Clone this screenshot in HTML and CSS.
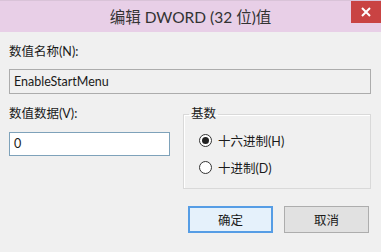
FILE: index.html
```html
<!DOCTYPE html>
<html lang="zh-CN">
<head>
    <meta charset="UTF-8">
    <title>编辑 DWORD (32 位)值</title>
    <link rel="stylesheet" href="styles.css">
</head>
<body>
    <div class="dialog">
        <!-- 标题栏 -->
        <div class="titlebar">
            <div class="title">编辑 DWORD (32 位)值</div>
            <div class="close">
                <svg width="10" height="10" viewBox="0 0 10 10"><path d="M1 1L9 9M9 1L1 9" stroke="#fff" stroke-width="2"/></svg>
            </div>
        </div>

        <div class="content">
            <div class="label">数值名称(N):</div>
            <div class="input name-input">EnableStartMenu</div>

            <div class="row">
                <div class="data-col">
                    <div class="label">数值数据(V):</div>
                    <div class="input value-input">0</div>
                </div>
                <fieldset class="base">
                    <legend>基数</legend>
                    <div class="radio-item"><span class="radio checked"></span>十六进制(H)</div>
                    <div class="radio-item"><span class="radio"></span>十进制(D)</div>
                </fieldset>
            </div>

            <div class="buttons">
                <button class="btn primary">确定</button>
                <button class="btn">取消</button>
            </div>
        </div>
    </div>
</body>
</html>
```

FILE: styles.css
```css
* {
    margin: 0;
    padding: 0;
    box-sizing: border-box;
}

body {
    width: 381px;
    height: 252px;
    background: #f0f0f0;
    font-family: Lato, "Noto Sans CJK SC", sans-serif;
    font-size: 12px;
    color: #1a1a1a;
    overflow: hidden;
}

.titlebar {
    height: 32px;
    background: #e8cfe7;
    border-top: 1px solid #d9c3d8;
    display: flex;
    justify-content: center;
    align-items: center;
    position: relative;
}

.title {
    font-size: 15.5px;
    color: #333;
    margin-top: -2px;
}

.close {
    position: absolute;
    top: 0;
    right: 0;
    width: 30px;
    height: 22px;
    background: #c94343;
    display: flex;
    align-items: center;
    justify-content: center;
}

.content {
    padding: 12px 10px 0 9px;
}

.label {
    line-height: 16px;
    font-size: 12.5px;
}

.input {
    height: 25px;
    line-height: 23px;
    padding-left: 4px;
    font-size: 12.5px;
}

.name-input {
    margin-top: 9px;
    border: 1px solid #acacac;
    background: #f0f0f0;
}

.row {
    display: grid;
    grid-template-columns: 161px 1fr;
    gap: 13px;
    margin-top: 12px;
}

.value-input {
    margin-top: 10px;
    height: 24px;
    line-height: 22px;
    border: 1px solid #7ea2ba;
    background: #fff;
}

.base {
    border: 1px solid #d9d9d9;
    box-shadow: inset 1px 1px 0 #fff;
    height: 83px;
    padding: 10px 0 0 15px;
}

.base legend {
    padding: 0 2px;
    margin-left: -10px;
    line-height: 16px;
    font-size: 12.5px;
}

.radio-item {
    display: flex;
    align-items: center;
    gap: 6px;
    height: 16px;
    margin-bottom: 11px;
    font-size: 12.5px;
}

.radio {
    width: 13px;
    height: 13px;
    border: 1px solid #333;
    border-radius: 50%;
    background: #fff;
    display: flex;
    align-items: center;
    justify-content: center;
}

.radio.checked::after {
    content: "";
    width: 7px;
    height: 7px;
    border-radius: 50%;
    background: #222;
}

.buttons {
    display: flex;
    justify-content: flex-end;
    gap: 11px;
    margin-top: 17px;
    padding-right: 2px;
}

.btn {
    width: 85px;
    height: 27px;
    font-family: inherit;
    font-size: 12.5px;
    color: #1a1a1a;
    background: #e1e1e1;
    border: 1px solid #adadad;
}

.btn.primary {
    background: #e5f1fb;
    border: 2px solid #569de5;
}
```
